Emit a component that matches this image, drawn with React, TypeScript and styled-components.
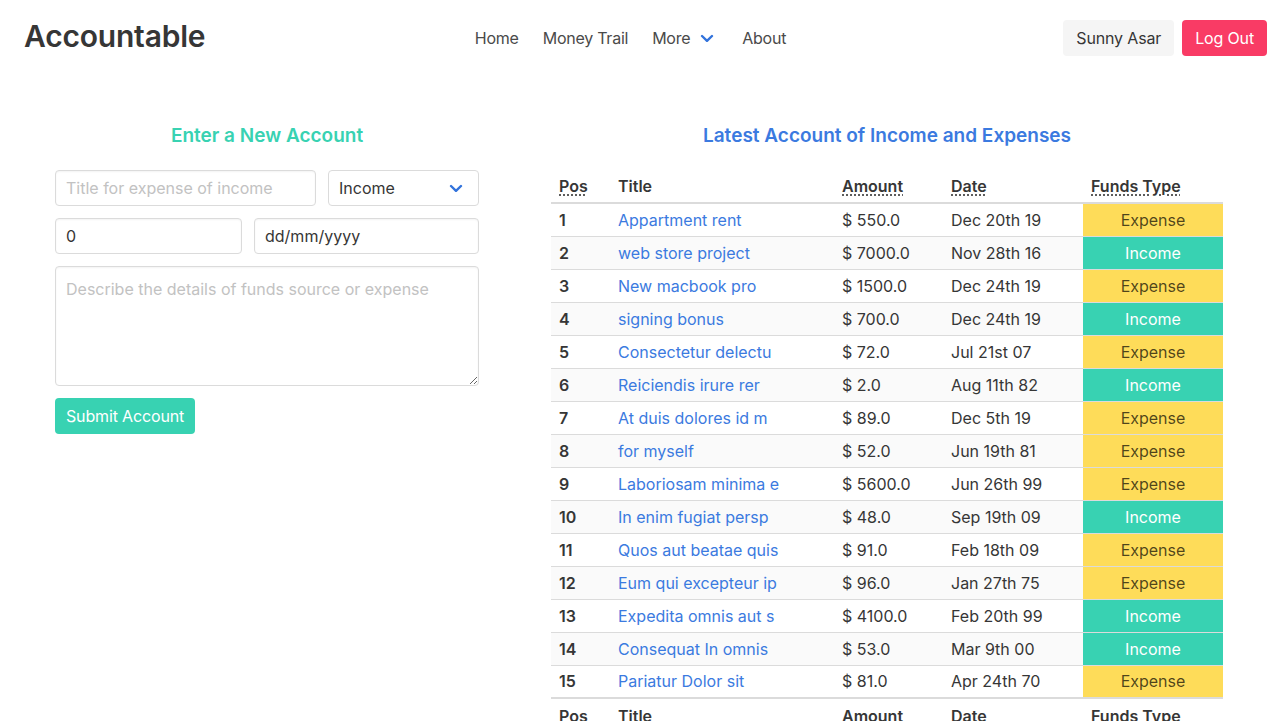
import React from 'react'
import styled, { createGlobalStyle } from 'styled-components'

const GlobalStyle = createGlobalStyle`
  * { box-sizing: border-box; }
  body {
    margin: 0;
    font-family: Inter, "Noto Sans", "Liberation Sans", sans-serif;
    font-size: 16px;
    color: #4a4a4a;
    background: #fff;
  }
`

interface Account {
  title: string
  amount: string
  date: string
  kind: 'Income' | 'Expense'
}

const accounts: Account[] = [
  { title: 'Appartment rent', amount: '550.0', date: 'Dec 20th 19', kind: 'Expense' },
  { title: 'web store project', amount: '7000.0', date: 'Nov 28th 16', kind: 'Income' },
  { title: 'New macbook pro', amount: '1500.0', date: 'Dec 24th 19', kind: 'Expense' },
  { title: 'signing bonus', amount: '700.0', date: 'Dec 24th 19', kind: 'Income' },
  { title: 'Consectetur delectu', amount: '72.0', date: 'Jul 21st 07', kind: 'Expense' },
  { title: 'Reiciendis irure rer', amount: '2.0', date: 'Aug 11th 82', kind: 'Income' },
  { title: 'At duis dolores id m', amount: '89.0', date: 'Dec 5th 19', kind: 'Expense' },
  { title: 'for myself', amount: '52.0', date: 'Jun 19th 81', kind: 'Expense' },
  { title: 'Laboriosam minima e', amount: '5600.0', date: 'Jun 26th 99', kind: 'Expense' },
  { title: 'In enim fugiat persp', amount: '48.0', date: 'Sep 19th 09', kind: 'Income' },
  { title: 'Quos aut beatae quis', amount: '91.0', date: 'Feb 18th 09', kind: 'Expense' },
  { title: 'Eum qui excepteur ip', amount: '96.0', date: 'Jan 27th 75', kind: 'Expense' },
  { title: 'Expedita omnis aut s', amount: '4100.0', date: 'Feb 20th 99', kind: 'Income' },
  { title: 'Consequat In omnis', amount: '53.0', date: 'Mar 9th 00', kind: 'Income' },
  { title: 'Pariatur Dolor sit', amount: '81.0', date: 'Apr 24th 70', kind: 'Expense' },
]

const Navbar = styled.nav`
  height: 76px;
  display: grid;
  grid-template-columns: 1fr auto 1fr;
  align-items: center;
  padding: 0 12px 0 24px;
`

const Brand = styled.a`
  font-size: 30px;
  font-weight: 600;
  color: #363636;
  letter-spacing: -0.2px;
  margin-top: -4px;
`

const NavLinks = styled.div`
  display: flex;
  align-items: center;
  padding-right: 30px;
  letter-spacing: -0.25px;
`

const NavItem = styled.a<{ $extra?: number }>`
  display: flex;
  align-items: center;
  gap: 10px;
  padding: 0 12px 0 ${p => 12 + (p.$extra ?? 0)}px;
  color: #4a4a4a;
  font-size: 16px;
`

const NavButtons = styled.div`
  display: flex;
  justify-content: flex-end;
  gap: 8px;
`

const Button = styled.button<{ $variant: 'light' | 'danger' | 'primary' }>`
  height: 36px;
  padding: 0 ${p => (p.$variant === 'primary' ? 11 : 13)}px;
  border: none;
  border-radius: 4px;
  font-family: inherit;
  font-size: 16px;
  letter-spacing: -0.15px;
  background: ${p => (p.$variant === 'light' ? '#f5f5f5' : p.$variant === 'danger' ? '#f93b65' : '#38d2b2')};
  color: ${p => (p.$variant === 'light' ? '#363636' : '#fff')};
`

const Main = styled.main`
  display: grid;
  grid-template-columns: 424px 672px;
  column-gap: 72px;
  padding: 49px 0 0 55px;
  align-items: start;
`

const Heading = styled.h2<{ $color: string }>`
  margin: 0 0 23px;
  text-align: center;
  font-size: 19px;
  font-weight: 600;
  line-height: 22px;
  color: ${p => p.$color};
`

const Form = styled.form`
  display: flex;
  flex-direction: column;
  gap: 12px;
`

const FieldRow = styled.div<{ $cols: string }>`
  display: grid;
  grid-template-columns: ${p => p.$cols};
  gap: 12px;
`

const Input = styled.input`
  height: 36px;
  width: 100%;
  padding: 0 10px;
  border: 1px solid #dbdbdb;
  border-radius: 4px;
  font-family: inherit;
  font-size: 16px;
  color: #363636;
  box-shadow: inset 0 1px 2px rgba(10, 10, 10, 0.05);
  &::placeholder { color: #c2c2c2; }
`

const SelectWrap = styled.div`
  position: relative;
`

const Select = styled.select`
  appearance: none;
  height: 36px;
  width: 100%;
  padding: 0 10px;
  border: 1px solid #dbdbdb;
  border-radius: 4px;
  background: #fff;
  font-family: inherit;
  font-size: 16px;
  color: #363636;
`

const SelectArrow = styled.span`
  position: absolute;
  right: 16px;
  top: 0;
  height: 36px;
  display: flex;
  align-items: center;
  pointer-events: none;
`

const TextArea = styled.textarea`
  height: 120px;
  width: 100%;
  padding: 12px 10px;
  border: 1px solid #dbdbdb;
  border-radius: 4px;
  font-family: inherit;
  font-size: 16px;
  color: #363636;
  box-shadow: inset 0 1px 2px rgba(10, 10, 10, 0.05);
  &::placeholder { color: #c2c2c2; }
`

const SubmitRow = styled.div`
  display: flex;
`

const Table = styled.table`
  width: 672px;
  border-collapse: collapse;
  table-layout: fixed;
  color: #363636;
`

const Th = styled.th<{ $w: number }>`
  width: ${p => p.$w}px;
  text-align: left;
  font-weight: 600;
  padding: 0 8px;
  abbr { text-decoration: underline dotted; text-underline-offset: 3px; }
`

const HeadRow = styled.tr`
  height: 33px;
  border-bottom: 2px solid #dbdbdb;
`

const FootRow = styled.tr`
  height: 34px;
  border-top: 2px solid #dbdbdb;
`

const BodyRow = styled.tr<{ $striped: boolean }>`
  height: 33px;
  background: ${p => (p.$striped ? '#fafafa' : '#fff')};
  border-bottom: 1px solid #dbdbdb;
  &:last-child { border-bottom: none; }
`

const Td = styled.td`
  padding: 0 8px;
  white-space: nowrap;
  overflow: hidden;
`

const PosCell = styled(Td)`
  font-weight: 600;
`

const TitleLink = styled.a`
  color: #3b7ae0;
`

const KindCell = styled(Td)<{ $kind: 'Income' | 'Expense' }>`
  text-align: center;
  background: ${p => (p.$kind === 'Income' ? '#38d2b2' : '#fedc59')};
  color: ${p => (p.$kind === 'Income' ? '#fff' : 'rgba(0,0,0,0.7)')};
`

const Chevron = ({ size = 14 }: { size?: number }) => (
  <svg width={size} height={size * 0.64} viewBox="0 0 14 9" fill="none">
    <path d="M2 2l5 5 5-5" stroke="#3273dc" strokeWidth="2.4" strokeLinecap="round" strokeLinejoin="round" />
  </svg>
)

const columns = [
  { label: 'Pos', w: 59, abbr: true },
  { label: 'Title', w: 224, abbr: false },
  { label: 'Amount', w: 109, abbr: true },
  { label: 'Date', w: 140, abbr: true },
  { label: 'Funds Type', w: 140, abbr: true },
]

const HeaderCells = ({ underline }: { underline: boolean }) => (
  <>
    {columns.map(c => (
      <Th key={c.label} $w={c.w}>
        {c.abbr && underline ? <abbr title={c.label}>{c.label}</abbr> : c.label}
      </Th>
    ))}
  </>
)

export default function App() {
  return (
    <>
      <GlobalStyle />
      <Navbar>
        <Brand>Accountable</Brand>
        <NavLinks>
          <NavItem>Home</NavItem>
          <NavItem>Money Trail</NavItem>
          <NavItem>
            More <Chevron />
          </NavItem>
          <NavItem $extra={4}>About</NavItem>
        </NavLinks>
        <NavButtons>
          <Button $variant="light">Sunny Asar</Button>
          <Button $variant="danger">Log Out</Button>
        </NavButtons>
      </Navbar>

      <Main>
        <section>
          <Heading $color="#38d2b2">Enter a New Account</Heading>
          <Form onSubmit={e => e.preventDefault()}>
            <FieldRow $cols="261px 151px">
              <Input placeholder="Title for expense of income" />
              <SelectWrap>
                <Select defaultValue="Income">
                  <option>Income</option>
                  <option>Expense</option>
                </Select>
                <SelectArrow>
                  <Chevron />
                </SelectArrow>
              </SelectWrap>
            </FieldRow>
            <FieldRow $cols="187px 225px">
              <Input defaultValue="0" />
              <Input defaultValue="dd/mm/yyyy" />
            </FieldRow>
            <TextArea placeholder="Describe the details of funds source or expense" />
            <SubmitRow>
              <Button $variant="primary">Submit Account</Button>
            </SubmitRow>
          </Form>
        </section>

        <section>
          <Heading $color="#3b7ae0">Latest Account of Income and Expenses</Heading>
          <Table>
            <thead>
              <HeadRow>
                <HeaderCells underline />
              </HeadRow>
            </thead>
            <tbody>
              {accounts.map((a, i) => (
                <BodyRow key={i} $striped={i % 2 === 1}>
                  <PosCell>{i + 1}</PosCell>
                  <Td>
                    <TitleLink>{a.title}</TitleLink>
                  </Td>
                  <Td>$ {a.amount}</Td>
                  <Td>{a.date}</Td>
                  <KindCell $kind={a.kind}>{a.kind}</KindCell>
                </BodyRow>
              ))}
            </tbody>
            <tfoot>
              <FootRow>
                <HeaderCells underline={false} />
              </FootRow>
            </tfoot>
          </Table>
        </section>
      </Main>
    </>
  )
}
